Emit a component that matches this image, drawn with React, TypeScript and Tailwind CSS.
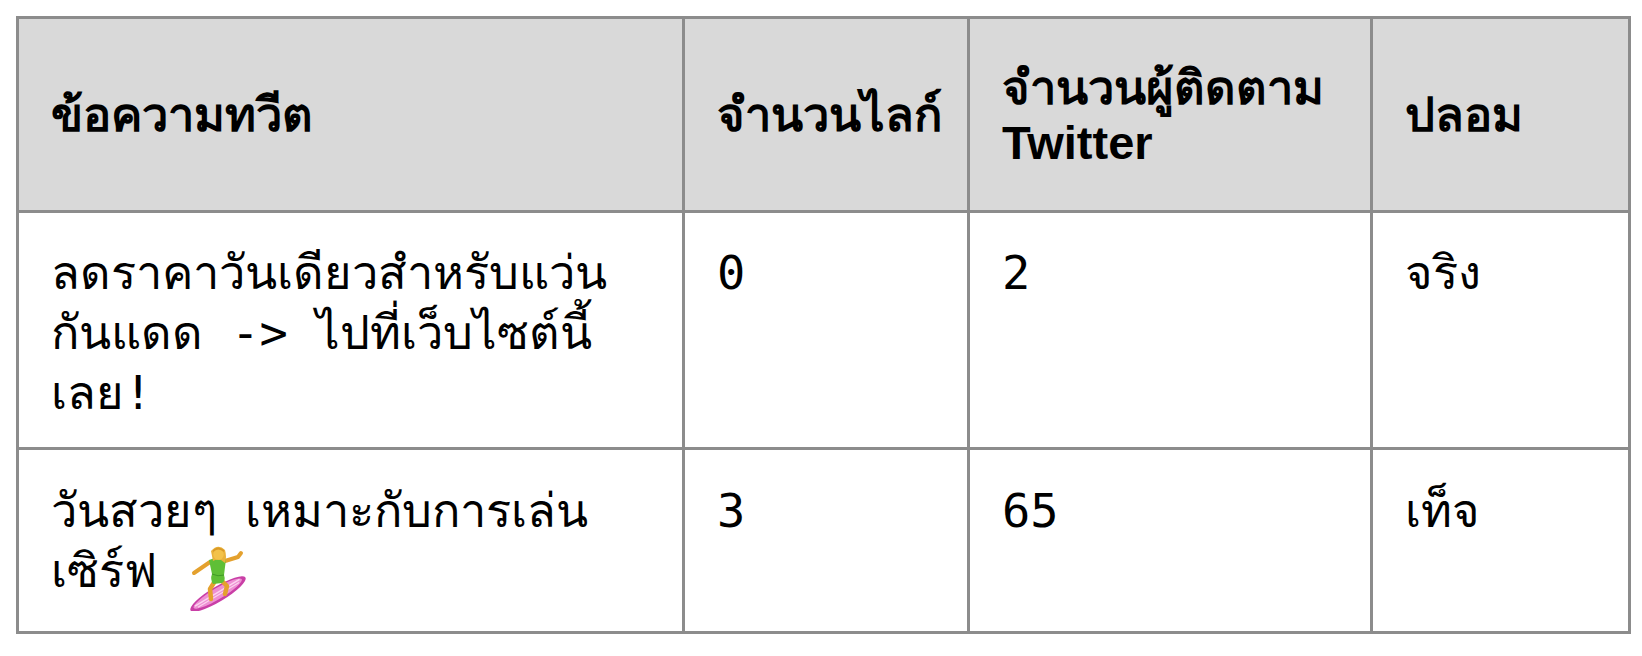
const rows = [
  {
    text: ["ลดราคาวันเดียวสำหรับแว่น", "กันแดด -> ไปที่เว็บไซต์นี้", "เลย!"],
    likes: "0",
    followers: "2",
    fake: "จริง",
    surfer: false,
  },
  {
    text: ["วันสวยๆ เหมาะกับการเล่น", "เซิร์ฟ"],
    likes: "3",
    followers: "65",
    fake: "เท็จ",
    surfer: true,
  },
];

// 🏄‍♀️ drawn by hand, no emoji font in the sandbox
function Surfer() {
  return (
    <svg width="60" height="66" viewBox="0 0 60 66" className="ml-[31px] inline-block align-[-24px]">
      <g transform="rotate(-31 30 49)">
        <ellipse cx="30" cy="49" rx="32" ry="7.5" fill="#c93fa6" />
        <ellipse cx="30" cy="48.5" rx="28" ry="5.5" fill="#ee8fd3" />
        <path d="M4 47.5 H56" stroke="#fbd4ef" strokeWidth="1.6" />
        <path d="M6 50 H54" stroke="#fbd4ef" strokeWidth="1.2" />
      </g>
      <path d="M27 36 L22 44 L23 54" stroke="#e4a12e" strokeWidth="4.5" strokeLinecap="round" strokeLinejoin="round" fill="none" />
      <path d="M33 35 L39 41 L37 49" stroke="#e4a12e" strokeWidth="4.5" strokeLinecap="round" strokeLinejoin="round" fill="none" />
      <path d="M22 17 L6 28" stroke="#e4a12e" strokeWidth="4" strokeLinecap="round" />
      <path d="M37 16 L50 12 L53 8" stroke="#e4a12e" strokeWidth="4" strokeLinecap="round" strokeLinejoin="round" fill="none" />
      <path d="M21 15 Q30 11 38 14 L36 30 Q38 36 34 38 L25 39 Q22 34 24 29 Z" fill="#5fbf36" />
      <path d="M24 29 Q30 32 36 30" stroke="#3f9a24" strokeWidth="1" fill="none" />
      <path d="M23 6 Q30 -2 37 5 Q39 12 37 18 L33 15 Q28 14 25 16 Z" fill="#eab23b" />
      <circle cx="30.5" cy="9.5" r="5.2" fill="#f3c24a" />
      <path d="M25 7 Q30 2 36 7 L36 5 Q30 0 25 5 Z" fill="#d99a28" />
    </svg>
  );
}

export default function App() {
  return (
    <main className="min-h-screen bg-white px-4 pt-4">
      <table className="w-[1612px] table-fixed border-collapse border-[3px] border-[#8c8c8c] text-black">
        <colgroup>
          <col className="w-[666px]" />
          <col className="w-[285px]" />
          <col className="w-[403px]" />
          <col className="w-[258px]" />
        </colgroup>
        <thead>
          <tr className="h-[194px] bg-[#d9d9d9] text-left align-middle font-['Liberation_Sans','Noto_Sans',sans-serif] text-[47px] font-bold leading-[55px]">
            <th className="whitespace-nowrap border-[3px] border-[#8c8c8c] px-8">ข้อความทวีต</th>
            <th className="whitespace-nowrap border-[3px] border-[#8c8c8c] pl-8 pr-2">จำนวนไลก์</th>
            <th className="whitespace-nowrap border-[3px] border-[#8c8c8c] px-8">
              จำนวนผู้ติดตาม
              <br />
              Twitter
            </th>
            <th className="whitespace-nowrap border-[3px] border-[#8c8c8c] px-8">ปลอม</th>
          </tr>
        </thead>
        <tbody className="font-['DejaVu_Sans_Mono','Liberation_Mono',monospace] text-[47px] leading-[60px]">
          {rows.map((row) => {
            const cell = row.surfer
              ? "border-[3px] border-[#8c8c8c] px-8 pt-[31px] pb-[30px]"
              : "border-[3px] border-[#8c8c8c] px-8 pt-[30px] pb-[24px]";
            return (
              <tr key={row.likes} className="align-top">
                <td className={cell}>
                  {row.text.map((line, i) => (
                    <div key={i} className="h-[60px] whitespace-nowrap">
                      {line}
                      {row.surfer && i === row.text.length - 1 ? <Surfer /> : null}
                    </div>
                  ))}
                </td>
                <td className={cell}>{row.likes}</td>
                <td className={cell}>{row.followers}</td>
                <td className={cell}>{row.fake}</td>
              </tr>
            );
          })}
        </tbody>
      </table>
    </main>
  );
}
